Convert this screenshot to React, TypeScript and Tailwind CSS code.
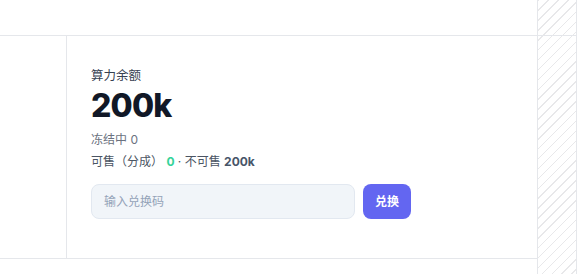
export default function App() {
  return (
    <div className="flex h-[274px] w-[578px] overflow-hidden bg-white font-['Inter','Noto_Sans_CJK_SC',sans-serif]">
      <div className="flex w-[537px] flex-col">
        <div className="h-[36px] border-b border-[#e5e7eb]" />

        <div className="flex h-[223px] border-b border-[#e5e7eb]">
          <div className="w-[67px] border-r border-[#e5e7eb]" />

          <div className="flex flex-1 flex-col px-6 pt-8">
            <div className="text-[12.5px] leading-4 text-[#374151]">算力余额</div>
            <div className="mt-[6px] text-[32px] font-extrabold leading-8 tracking-tight text-[#111827]">
              200k
            </div>
            <div className="mt-[10px] text-xs leading-4 text-[#6b7280]">冻结中 0</div>
            <div className="mt-[6px] text-xs leading-4 text-[#4b5563]">
              可售（分成） <span className="font-bold text-[#34d399]">0</span> · 不可售{' '}
              <span className="font-bold text-[#475569]">200k</span>
            </div>

            <div className="mt-[14px] flex gap-2">
              <input
                placeholder="输入兑换码"
                className="h-[35px] w-[264px] rounded-lg border border-[#e2e8f0] bg-[#f1f5f9] px-3 text-xs text-[#334155] outline-none placeholder:text-[#94a3b8]"
              />
              <button className="h-[35px] w-[48px] rounded-lg bg-[#6366f1] text-xs font-bold text-white">
                兑换
              </button>
            </div>
          </div>
        </div>
      </div>

      <div className="flex w-[40px] flex-col border-x border-[#e5e7eb] bg-[repeating-linear-gradient(135deg,#e8e8ea_0px,#e8e8ea_1px,transparent_1px,transparent_7px)]">
        <div className="h-[36px] border-b border-[#e5e7eb]" />
      </div>
    </div>
  );
}
